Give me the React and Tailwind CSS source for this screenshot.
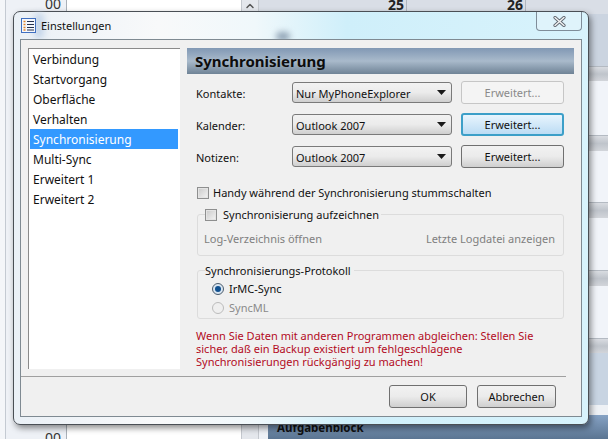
import { ChevronUp } from "lucide-react";

const pages = ["Verbindung", "Startvorgang", "Oberfläche", "Verhalten", "Synchronisierung", "Multi-Sync", "Erweitert 1", "Erweitert 2"];

const Arrow = () => (
  <svg width="9" height="5" viewBox="0 0 9 5" className="shrink-0">
    <path d="M0 0h9L4.5 5z" fill="#1a1a1a" />
  </svg>
);

const Combo = ({ value }) => (
  <div className="w-[160px] h-[21px] flex items-center justify-between pl-[3px] pr-[5px] rounded-[3px] border border-[#7a7a7a] bg-gradient-to-b from-[#f2f2f2] via-[#ebebeb] to-[#cfcfcf] text-[#111]">
    <span className="pt-[1px]">{value}</span>
    <Arrow />
  </div>
);

const Button = ({ label, width = "w-[103px]", state }) => {
  if (state === "disabled") {
    return <div className={`${width} h-[23px] flex items-center justify-center rounded-[3px] border border-[#c6c6c6] bg-[#f4f4f4] text-[#8a8a8a]`}>{label}</div>;
  }
  if (state === "focus") {
    return <div className={`${width} h-[23px] flex items-center justify-center rounded-[3px] border-2 border-[#3c9fc8] bg-gradient-to-b from-[#e8f5fd] to-[#bcdcf4] text-[#111]`}>{label}</div>;
  }
  return <div className={`${width} h-[23px] flex items-center justify-center rounded-[3px] border border-[#707070] bg-gradient-to-b from-[#f2f2f2] via-[#ebebeb] to-[#cfcfcf] text-[#111]`}>{label}</div>;
};

const Checkbox = () => (
  <span className="block w-[12px] h-[12px] shrink-0 border border-[#8e8f8f] bg-gradient-to-br from-[#c9c9c9] to-[#f4f4f4] outline outline-1 -outline-offset-2 outline-[#e4e4e4]" />
);

const SyncRow = ({ label, value, state }) => (
  <div className="flex items-center h-[23px]">
    <span className="w-[96px] pt-[1px] text-[#111]">{label}</span>
    <Combo value={value} />
    <div className="ml-[9px]">
      <Button label="Erweitert..." state={state} />
    </div>
  </div>
);

const Band = () => <div className="h-[16px] bg-gradient-to-b from-[#d9dce1] via-[#bfc4cb] to-[#d2d5da] border-t border-[#b4bac2]" />;

export default function App() {
  return (
    <div className="relative w-[608px] h-[439px] overflow-hidden bg-[#eef1f6] text-[11px] leading-[13px] font-['Noto_Sans',sans-serif]">
      {/* calendar window behind the dialog */}
      <div className="absolute inset-0 flex">
        <div className="w-[6px] bg-[#f4f6f9] border-r border-[#c4cad2]" />
        <div className="w-[61px] flex flex-col justify-between text-[14px] text-[#333] items-end pr-[5px] border-r border-[#aab0b8]">
          <span className="-mt-[3px]">00</span>
          <span className="-mb-[5px]">00</span>
        </div>
        <div className="w-[174px] bg-white" />
        <div className="w-[18px] bg-[#e4e7ec] border-x border-[#c4c8ce] flex justify-center"><ChevronUp size={12} strokeWidth={3} color="#555" /></div>
        <div className="flex-1 flex flex-col">
          <div className="h-[14px] shrink-0 bg-[#d9dee6] flex font-bold text-[14px] text-[#222]">
            <span className="w-[148px] text-right pr-[2px] -mt-[2px] border-r border-[#b0b6be]">25</span>
            <span className="w-[119px] text-right pr-[2px] -mt-[2px] border-r border-[#b0b6be]">26</span>
          </div>
          <div className="h-[52px] shrink-0 bg-[#cbd4e0]" />
          <div className="h-[15px] shrink-0 bg-gradient-to-b from-[#d9dce1] via-[#bfc4cb] to-[#d2d5da] border-t border-[#b4bac2]" />
          <div className="h-[54px] shrink-0 bg-[#f1f4f9]" />
          <Band />
          <div className="h-[51px] shrink-0 bg-[#f1f4f9]" />
          <Band />
          <div className="h-[52px] shrink-0 bg-[#f1f4f9]" />
          <Band />
          <div className="h-[52px] shrink-0 bg-[#f1f4f9]" />
          <div className="h-[15px] shrink-0 bg-gradient-to-b from-[#d9dce1] via-[#bfc4cb] to-[#d2d5da] border-t border-[#b4bac2]" />
          <div className="h-[52px] shrink-0 bg-[#c8d4e2]" />
          <div className="h-[10px] shrink-0 bg-[#eef1f5]" />
          <div className="flex-1 ml-[9px] bg-gradient-to-b from-[#86a2c4] to-[#5b7592] text-[11.5px] font-bold text-[#111] pl-[9px] pt-[6px]">Aufgabenblock</div>
        </div>
      </div>

      {/* dialog */}
      <div className="absolute left-[13px] top-[11px] w-[576px] h-[414px] flex flex-col px-[6px] pb-[7px] rounded-[7px] border border-[#4a4f55] shadow-[2px_3px_6px_rgba(0,0,0,0.45)] bg-[linear-gradient(90deg,#eaf0f6_0%,#f8f9fa_25%,#f0f8fb_42%,#cfeffa_58%,#d8f3fc_100%)]">
        <span className="absolute left-[262px] top-[20px] w-[14px] h-[9px] rounded-full bg-[#8fa2b4] blur-[3px]" />
        <span className="absolute left-[20px] top-[1px] w-[10px] h-[26px] rounded-full bg-[#c6d6ea] blur-[3px]" />

        <div className="relative h-[27px] shrink-0 flex items-center gap-[5px] text-[#111]">
          <svg width="15" height="15" viewBox="0 0 15 15" className="shrink-0 ml-[1px]">
            <rect x="0.5" y="0.5" width="14" height="14" fill="#f4f7fd" stroke="#3f6fc0" />
            <path d="M2.5 3.5h2M2.5 6.5h2M2.5 9.5h2M2.5 12h2" stroke="#e2862a" strokeWidth="1.5" />
            <path d="M6 3.5h7M6 6.5h7M6 9.5h7M6 12h7" stroke="#26324f" strokeWidth="1.2" />
          </svg>
          <span>Einstellungen</span>
          <div className="ml-auto self-start w-[46px] h-[19px] flex items-center justify-center rounded-b-[4px] border border-t-0 border-[#7f8d99] bg-[#dff3fb]">
            <svg width="13" height="11" viewBox="0 0 13 11">
              <path d="M2 1.5l9 8M11 1.5l-9 8" fill="none" stroke="#5f6670" strokeWidth="3.2" strokeLinecap="round" />
              <path d="M2 1.5l9 8M11 1.5l-9 8" fill="none" stroke="#f5f5f5" strokeWidth="1.4" strokeLinecap="round" />
            </svg>
          </div>
        </div>

        <div className="relative flex-1 min-h-0 flex flex-col border border-[#7f8a92] bg-[#f0f0f0]">
          <div className="h-[336px] shrink-0 flex pt-[8px] pl-[7px] gap-[7px]">
            <div className="w-[152px] h-[321px] bg-white border-l border-t border-[#8a8a8a] text-[12px] leading-[20px]">
              {pages.map((p) => (
                <div key={p} className={p === "Synchronisierung" ? "h-[20px] pt-[1px] bg-[#3399ff] text-white pl-[3px] ml-[1px] mr-[2px]" : "h-[20px] pt-[1px] pl-[4px] text-[#111]"}>{p}</div>
              ))}
            </div>

            <div className="w-[387px] flex flex-col">
              <div className="h-[26px] shrink-0 flex items-center pl-[8px] text-[15px] font-bold text-[#0d0d0d] bg-gradient-to-b from-[#8198b4] via-[#a9bacb] to-[#6f8396]">Synchronisierung</div>
              <div className="flex flex-col gap-[9px] pl-[9px] pt-[7px]">
                <SyncRow label="Kontakte:" value="Nur MyPhoneExplorer" state="disabled" />
                <SyncRow label="Kalender:" value="Outlook 2007" state="focus" />
                <SyncRow label="Notizen:" value="Outlook 2007" />
              </div>
              <div className="flex items-center gap-[4px] pl-[10px] mt-[18px] text-[#111]">
                <Checkbox />
                <span>Handy während der Synchronisierung stummschalten</span>
              </div>

              <fieldset className="ml-[10px] mr-[10px] mt-[9px] h-[48px] border border-[#dcdcdc] rounded-[3px] px-[7px]">
                <legend className="flex items-center gap-[6px] pr-[2px] text-[#111]">
                  <Checkbox />
                  <span>Synchronisierung aufzeichnen</span>
                </legend>
                <div className="flex justify-between -ml-[1px] mt-[11px] text-[#7f7f7f]">
                  <span>Log-Verzeichnis öffnen</span>
                  <span className="mr-[1px]">Letzte Logdatei anzeigen</span>
                </div>
              </fieldset>

              <fieldset className="ml-[10px] mr-[10px] mt-[8px] h-[55px] border border-[#dcdcdc] rounded-[3px] px-[7px]">
                <legend className="pr-[3px] text-[#111]">Synchronisierungs-Protokoll</legend>
                <div className="flex items-center gap-[5px] pl-[7px] mt-[4px] h-[15px] text-[#111]">
                  <span className="w-[12px] h-[12px] rounded-full border border-[#4d5d6d] bg-[#d9e6f2] flex items-center justify-center">
                    <span className="w-[6px] h-[6px] rounded-full bg-[#10508f]" />
                  </span>
                  <span>IrMC-Sync</span>
                </div>
                <div className="flex items-center gap-[5px] pl-[7px] mt-[4px] h-[15px] text-[#8a8a8a]">
                  <span className="w-[12px] h-[12px] rounded-full border border-[#bcbcbc] bg-[#efefef]" />
                  <span>SyncML</span>
                </div>
              </fieldset>

              <p className="pl-[9px] mt-[10px] text-[#b30b1e]">
                Wenn Sie Daten mit anderen Programmen abgleichen: Stellen Sie<br />
                sicher, daß ein Backup existiert um fehlgeschlagene<br />
                Synchronisierungen rückgängig zu machen!
              </p>
            </div>
          </div>

          <div className="w-[545px] border-t border-[#a0a0a0]" />
          <div className="flex justify-end gap-[10px] pt-[8px] pr-[25px]">
            <Button label="OK" width="w-[78px]" />
            <Button label="Abbrechen" width="w-[79px]" />
          </div>
        </div>
      </div>
    </div>
  );
}
